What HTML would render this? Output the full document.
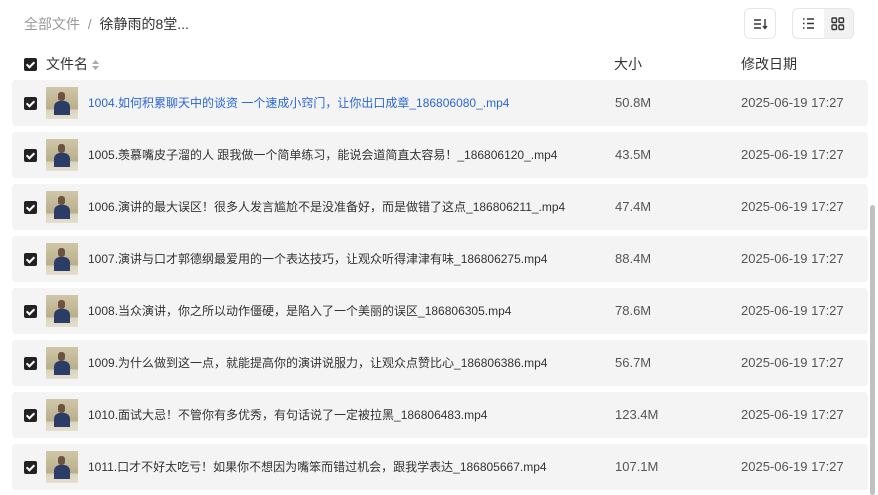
<!DOCTYPE html>
<html><head><meta charset="utf-8"><style>
*{margin:0;padding:0;box-sizing:border-box}
body{width:878px;height:495px;overflow:hidden;background:#fff;font-family:"Liberation Sans","Noto Sans CJK SC",sans-serif;color:#333;position:relative}
.bc{position:absolute;left:24px;top:15px;font-size:14px;color:#999;line-height:18px}
.bc b{font-weight:normal;color:#333}
.btn{position:absolute;top:8px;height:31px;border:1px solid #e6e6e6;border-radius:6px;background:#fff}
.hd{position:absolute;top:55px;font-size:14px;color:#333;line-height:18px}
.cb{position:absolute;width:13px;height:13px;background:#222;border-radius:2px}
.cb::after{content:"";position:absolute;left:4px;top:2px;width:3px;height:6px;border:solid #fff;border-width:0 2px 2px 0;transform:rotate(45deg)}
.row{position:absolute;left:12px;width:856px;height:46px;background:#f4f4f4;border-radius:4px}
.row .cb{left:12px;top:17px}
.th{position:absolute;left:34px;top:7px;width:32px;height:32px;background:linear-gradient(#cfc7a8 0,#b9ae8a 70%,#d9d3bd 70%,#e4dfcd 100%);overflow:hidden}
.th::before{content:"";position:absolute;left:8px;top:14px;width:16px;height:14px;background:#2b3c66;border-radius:6px 6px 0 0}
.th::after{content:"";position:absolute;left:12px;top:5px;width:7px;height:9px;background:#6e5240;border-radius:3px}
.nm{position:absolute;left:76px;top:15px;font-size:12px;line-height:16px;color:#333;white-space:nowrap}
.sz{position:absolute;left:603px;top:15px;font-size:13px;line-height:16px;color:#555}
.dt{position:absolute;left:729px;top:15px;font-size:13px;line-height:16px;color:#555}
.sb{position:absolute;left:870px;top:205px;width:5px;height:290px;background:#c1c1c1;border-radius:3px}
</style></head><body>
<div class="bc">全部文件 &nbsp;/&nbsp; <b>徐静雨的8堂...</b></div>
<div class="btn" style="left:744px;width:32px">
<svg width="32" height="31" viewBox="0 0 32 31"><g stroke="#333" stroke-width="1.4" fill="none"><path d="M9 11h7M9 15h7M9 19h7M20 10v9M18 17l2 2.5 2-2.5"/></g></svg></div>
<div class="btn" style="left:792px;width:62px;background:#f2f2f2">
<div style="position:absolute;left:0;top:0;width:31px;height:29px;background:#fff;border-radius:6px 0 0 6px"></div>
<svg style="position:absolute;left:0;top:0" width="62" height="29" viewBox="0 0 62 29"><g stroke="#333" stroke-width="1.4" fill="none"><path d="M10 10h1.5M10 14.5h1.5M10 19h1.5M14 10h7M14 14.5h7M14 19h7"/><rect x="39" y="9" width="4.5" height="4.5" rx="1"/><rect x="46" y="9" width="4.5" height="4.5" rx="1"/><rect x="39" y="16" width="4.5" height="4.5" rx="1"/><rect x="46" y="16" width="4.5" height="4.5" rx="1"/></g></svg></div>
<div class="cb" style="left:24px;top:58px"></div>
<div class="hd" style="left:46px">文件名 <svg width="7" height="10" viewBox="0 0 7 10" style="vertical-align:-1px"><path d="M3.5 0L7 4H0z M3.5 10L7 6H0z" fill="#aaa"/></svg></div>
<div class="hd" style="left:614px">大小</div>
<div class="hd" style="left:741px">修改日期</div>

<div class="row" style="top:80px"><div class="cb"></div><div class="th"></div><div class="nm" style="color:#2a66d9">1004.如何积累聊天中的谈资 一个速成小窍门，让你出口成章_186806080_.mp4</div><div class="sz">50.8M</div><div class="dt">2025-06-19 17:27</div></div>
<div class="row" style="top:132px"><div class="cb"></div><div class="th"></div><div class="nm">1005.羡慕嘴皮子溜的人 跟我做一个简单练习，能说会道简直太容易！_186806120_.mp4</div><div class="sz">43.5M</div><div class="dt">2025-06-19 17:27</div></div>
<div class="row" style="top:184px"><div class="cb"></div><div class="th"></div><div class="nm">1006.演讲的最大误区！很多人发言尴尬不是没准备好，而是做错了这点_186806211_.mp4</div><div class="sz">47.4M</div><div class="dt">2025-06-19 17:27</div></div>
<div class="row" style="top:236px"><div class="cb"></div><div class="th"></div><div class="nm">1007.演讲与口才郭德纲最爱用的一个表达技巧，让观众听得津津有味_186806275.mp4</div><div class="sz">88.4M</div><div class="dt">2025-06-19 17:27</div></div>
<div class="row" style="top:288px"><div class="cb"></div><div class="th"></div><div class="nm">1008.当众演讲，你之所以动作僵硬，是陷入了一个美丽的误区_186806305.mp4</div><div class="sz">78.6M</div><div class="dt">2025-06-19 17:27</div></div>
<div class="row" style="top:340px"><div class="cb"></div><div class="th"></div><div class="nm">1009.为什么做到这一点，就能提高你的演讲说服力，让观众点赞比心_186806386.mp4</div><div class="sz">56.7M</div><div class="dt">2025-06-19 17:27</div></div>
<div class="row" style="top:392px"><div class="cb"></div><div class="th"></div><div class="nm">1010.面试大忌！不管你有多优秀，有句话说了一定被拉黑_186806483.mp4</div><div class="sz">123.4M</div><div class="dt">2025-06-19 17:27</div></div>
<div class="row" style="top:444px"><div class="cb"></div><div class="th"></div><div class="nm">1011.口才不好太吃亏！如果你不想因为嘴笨而错过机会，跟我学表达_186805667.mp4</div><div class="sz">107.1M</div><div class="dt">2025-06-19 17:27</div></div>
<div class="sb"></div>
</body></html>
